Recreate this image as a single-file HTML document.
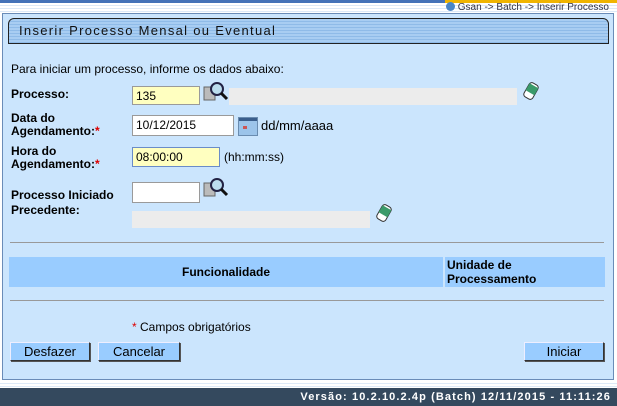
<!DOCTYPE html>
<html><head><meta charset="utf-8"><style>
*{margin:0;padding:0;box-sizing:border-box}
body{width:617px;height:406px;overflow:hidden;background:#fff;font-family:"Liberation Sans",Arial,sans-serif;font-size:12px;color:#000;position:relative}
.a{position:absolute;white-space:nowrap}
.b{font-weight:bold}
.in{position:absolute;border:1px solid #9a9a9a;background:#fff;font-size:12px;padding:2px 3px;line-height:14px}
.y{background:#ffffc0}
.g{position:absolute;background:#ececec}
.btn{position:absolute;height:19px;background:#99ccff;border:1px solid #333;border-top-color:#eef;border-left-color:#eef;font-size:13px;text-align:center;line-height:17px;box-shadow:1px 1px 0 #555}
.red{color:#d00}
hr{position:absolute;border:0;height:1px;background:#999;left:10px;width:594px}
</style></head><body>
<div class="a" style="left:0;top:0;width:617px;height:12px;background:repeating-linear-gradient(#fff 0 2px,#dde9f7 2px 3px)"></div>
<div class="a" style="left:0;top:0;width:445px;height:3px;background:#4472b8"></div>
<div class="a" style="left:445px;top:0;width:172px;height:3px;background:#f0b400"></div>
<div class="a" style="left:446px;top:2px;font-size:10px;color:#334">
<span style="display:inline-block;width:9px;height:9px;border-radius:50%;background:#4a86c8;vertical-align:-1px"></span> Gsan -&gt; Batch -&gt; Inserir Processo</div>
<div class="a" style="left:2px;top:13px;width:612px;height:367px;background:#cbe5fd;border:1px solid #6a8cb8"></div>
<div class="a" style="left:8px;top:18px;width:601px;height:26px;border:1px solid #222;border-radius:6px 6px 0 0;background:repeating-linear-gradient(#a8cdf2 0 2px,#8fbbe8 2px 3px)"></div>
<div class="a" style="left:19px;top:23px;font-size:13px;letter-spacing:1.3px;color:#111">Inserir Processo Mensal ou Eventual</div>
<div class="a" style="left:11px;top:62px">Para iniciar um processo, informe os dados abaixo:</div>
<div class="a b" style="left:11px;top:87px">Processo:</div>
<div class="in y" style="left:132px;top:86px;width:68px;height:19px">135</div>
<svg class="a" style="left:203px;top:81px" width="26" height="22"><rect x="1" y="6" width="11" height="13" fill="#bbb" stroke="#666"/><circle cx="14" cy="8" r="6" fill="#bde" stroke="#224" stroke-width="2"/><line x1="18" y1="12" x2="24" y2="18" stroke="#111" stroke-width="3"/></svg>
<div class="g" style="left:229px;top:88px;width:288px;height:17px"></div>
<svg class="a" style="left:521px;top:81px" width="20" height="20"><g transform="rotate(30 10 10)"><rect x="5" y="2" width="10" height="16" rx="3" fill="#fff" stroke="#333"/><rect x="5" y="4" width="10" height="8" fill="#3a9a6a"/></g></svg>
<div class="a b" style="left:11px;top:112px;line-height:13px">Data do<br>Agendamento:<span class="red">*</span></div>
<div class="in" style="left:132px;top:115px;width:102px;height:21px">10/12/2015</div>
<svg class="a" style="left:238px;top:117px" width="20" height="19"><rect x="0.5" y="0.5" width="19" height="18" fill="#9cc4ea" stroke="#6a8cb0"/><rect x="1" y="1" width="18" height="3" fill="#3a5e8c"/><rect x="5" y="9" width="4" height="3" fill="#c55"/></svg>
<div class="a" style="left:261px;top:118px;font-size:13px">dd/mm/aaaa</div>
<div class="a b" style="left:11px;top:145px;line-height:13px">Hora do<br>Agendamento:<span class="red">*</span></div>
<div class="in y" style="left:132px;top:147px;width:88px;height:20px;border-color:#6a8cc8">08:00:00</div>
<div class="a" style="left:224px;top:150px">(hh:mm:ss)</div>
<div class="a b" style="left:11px;top:188px;line-height:15px">Processo Iniciado<br>Precedente:</div>
<div class="in" style="left:132px;top:182px;width:68px;height:21px"></div>
<svg class="a" style="left:203px;top:177px" width="26" height="22"><rect x="1" y="6" width="11" height="13" fill="#bbb" stroke="#666"/><circle cx="14" cy="8" r="6" fill="#bde" stroke="#224" stroke-width="2"/><line x1="18" y1="12" x2="24" y2="18" stroke="#111" stroke-width="3"/></svg>
<div class="g" style="left:132px;top:211px;width:238px;height:17px"></div>
<svg class="a" style="left:374px;top:203px" width="20" height="20"><g transform="rotate(30 10 10)"><rect x="5" y="2" width="10" height="16" rx="3" fill="#fff" stroke="#333"/><rect x="5" y="4" width="10" height="8" fill="#3a9a6a"/></g></svg>
<hr style="top:242px">
<div class="a" style="left:9px;top:257px;width:434px;height:30px;background:#99ccff"></div>
<div class="a" style="left:445px;top:257px;width:160px;height:30px;background:#99ccff"></div>
<div class="a b" style="left:9px;top:265px;width:434px;text-align:center">Funcionalidade</div>
<div class="a b" style="left:447px;top:258px;line-height:14px">Unidade de<br>Processamento</div>
<hr style="top:300px">
<div class="a" style="left:132px;top:320px"><span class="red">*</span> Campos obrigatórios</div>
<div class="btn" style="left:10px;top:342px;width:80px">Desfazer</div>
<div class="btn" style="left:98px;top:342px;width:82px">Cancelar</div>
<div class="btn" style="left:524px;top:342px;width:80px">Iniciar</div>
<div class="a" style="left:0;top:381px;width:617px;height:7px;background:repeating-linear-gradient(#fff 0 2px,#dde9f7 2px 3px)"></div>
<div class="a" style="left:0;top:388px;width:617px;height:18px;background:#34495e"></div>
<div class="a b" style="right:6px;top:391px;color:#fff;font-size:11px;letter-spacing:1.1px">Versão: 10.2.10.2.4p (Batch) 12/11/2015 - 11:11:26</div>
</body></html>
